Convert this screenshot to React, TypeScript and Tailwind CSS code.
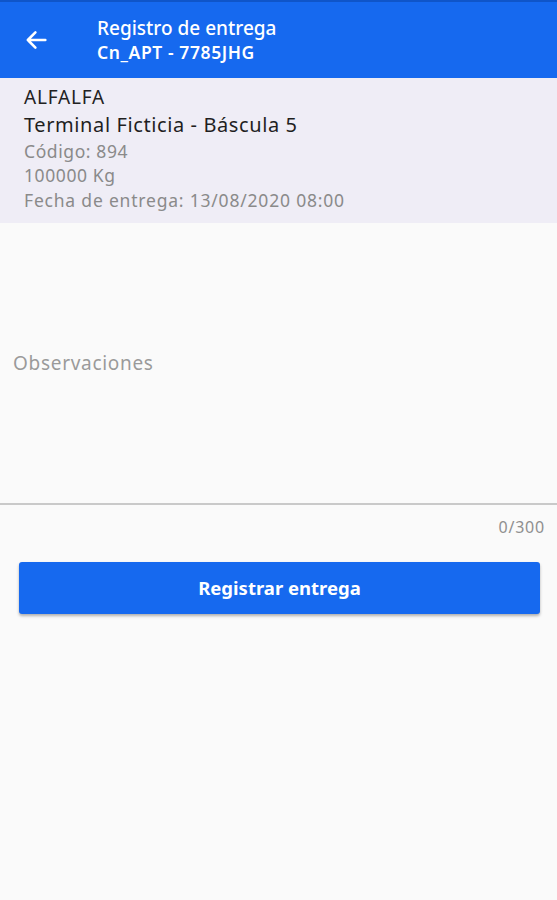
import React, { useState } from "react";

function BackArrow() {
  return (
    <svg width="28" height="28" viewBox="0 0 24 24" fill="none">
      <path
        d="M20 12H5M11.5 5.5L5 12l6.5 6.5"
        stroke="white"
        strokeWidth="2.2"
        strokeLinecap="round"
        strokeLinejoin="round"
      />
    </svg>
  );
}

export default function App() {
  const [notes, setNotes] = useState("");

  return (
    <div
      className="w-[557px] h-[900px] bg-[#fafafa] flex flex-col"
      style={{ fontFamily: '"Noto Sans", "Open Sans", sans-serif' }}
    >
      <header className="h-[78px] bg-[#1669ef] border-t-2 border-[#0f55c9] flex items-center shadow-sm">
        <button className="w-[72px] h-full flex items-center justify-center">
          <BackArrow />
        </button>
        <div className="ml-[25px] flex flex-col text-white leading-[24px]">
          <span className="text-[19px] font-medium">Registro de entrega</span>
          <span className="text-[17.5px] font-semibold tracking-[0.6px]">
            Cn_APT - 7785JHG
          </span>
        </div>
      </header>

      <section className="h-[145px] bg-[#efedf6] pl-6 pt-[7px] flex flex-col leading-[24.5px]">
        <span className="text-[19px] text-[#222] tracking-[0.8px]">ALFALFA</span>
        <span className="text-[20px] text-[#1f1f1f] leading-[29px] tracking-[0.6px]">
          Terminal Ficticia - Báscula 5
        </span>
        <span className="text-[17.5px] text-[#8a8a8a] tracking-[0.6px]">Código: 894</span>
        <span className="text-[17.5px] text-[#8a8a8a] tracking-[0.6px]">100000 Kg</span>
        <span className="text-[17.5px] text-[#8a8a8a] tracking-[0.8px]">
          Fecha de entrega: 13/08/2020 08:00
        </span>
      </section>

      <div className="h-[282px] border-b-2 border-[#c9c9c9] flex flex-col justify-center">
        <textarea
          value={notes}
          onChange={(e) => setNotes(e.target.value)}
          maxLength={300}
          placeholder="Observaciones"
          className="w-full h-[40px] mt-[16px] px-[13px] bg-transparent resize-none outline-none text-[19px] tracking-[0.7px] text-[#333] placeholder:text-[#9a9a9a] leading-[24px]"
        />
      </div>

      <div className="flex justify-end pr-3 pt-[10px] text-[16px] tracking-[0.8px] text-[#8f8f8f]">
        {notes.length}/300
      </div>

      <div className="pl-[19px] pt-[23px]">
        <button className="w-[521px] h-[52px] bg-[#1669ef] rounded-[3px] text-white text-[18.5px] font-bold shadow-[0_2px_3px_rgba(0,0,0,0.3)]">
          Registrar entrega
        </button>
      </div>
    </div>
  );
}
